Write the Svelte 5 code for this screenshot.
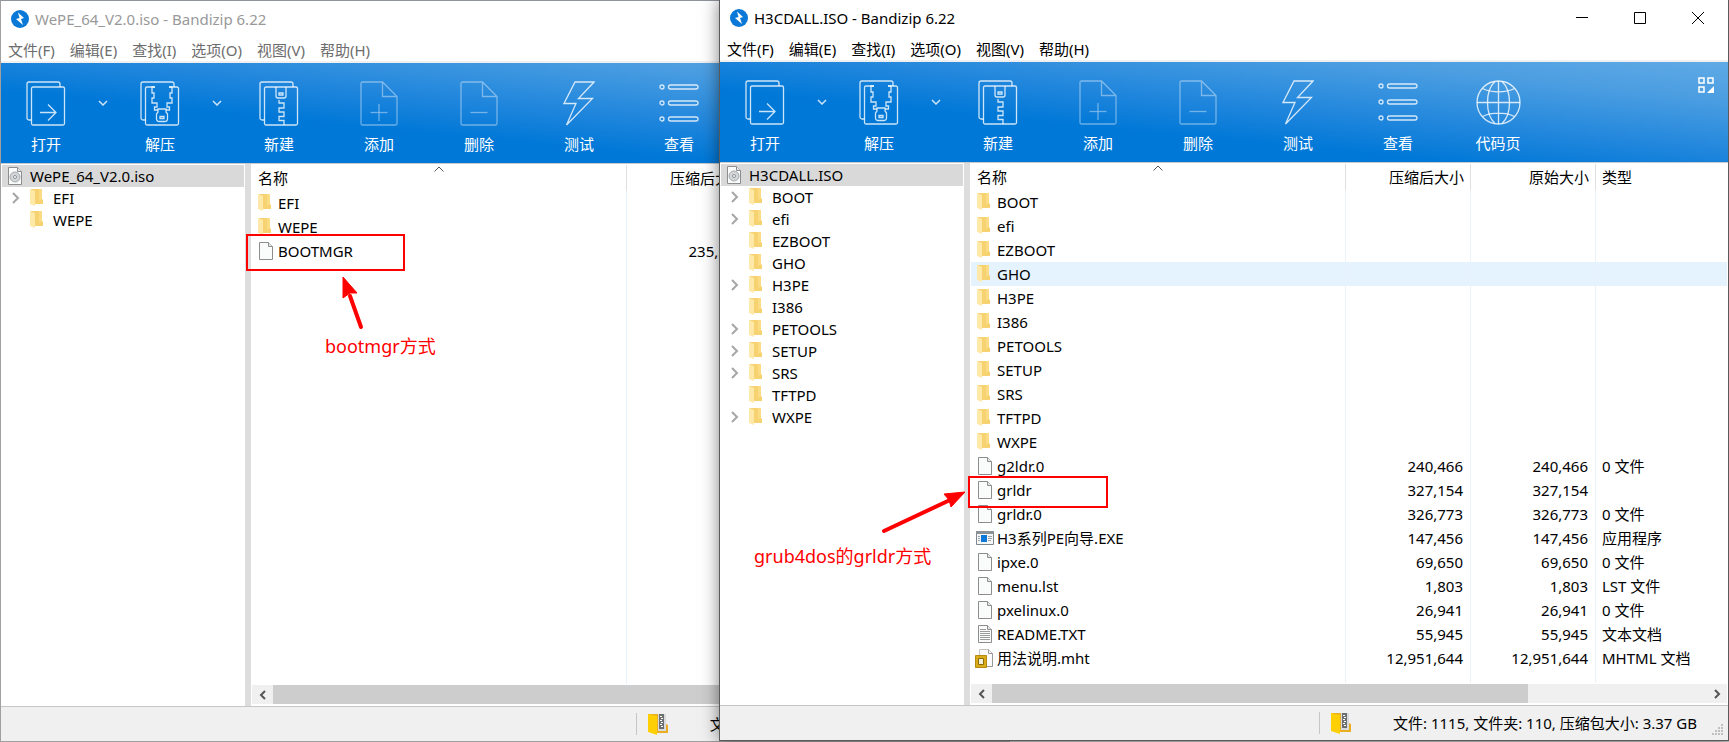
<script lang="ts">
	type Row = { name: string; icon: string; size?: string; type?: string; hover?: boolean };
	type TreeNode = { name: string; open?: boolean };
	type ArchiveWindow = {
		id: string;
		title: string;
		active: boolean;
		tree: TreeNode[];
		rows: Row[];
		status: string;
	};

	const menus = ['文件(F)', '编辑(E)', '查找(I)', '选项(O)', '视图(V)', '帮助(H)'];

	const tools = [
		{ icon: 'open', label: '打开', menu: true },
		{ icon: 'extract', label: '解压', menu: true },
		{ icon: 'new', label: '新建' },
		{ icon: 'add', label: '添加', disabled: true },
		{ icon: 'delete', label: '删除', disabled: true },
		{ icon: 'test', label: '测试' },
		{ icon: 'view', label: '查看' },
		{ icon: 'codepage', label: '代码页' },
	];

	const windows: ArchiveWindow[] = [
		{
			id: 'back',
			title: 'WePE_64_V2.0.iso',
			active: false,
			tree: [{ name: 'EFI', open: true }, { name: 'WEPE' }],
			rows: [
				{ name: 'EFI', icon: 'folder' },
				{ name: 'WEPE', icon: 'folder' },
				{ name: 'BOOTMGR', icon: 'file', size: '235,520' },
			],
			status: '文件: 16, 文件夹: 4, 压缩包大小: 158 MB',
		},
		{
			id: 'front',
			title: 'H3CDALL.ISO',
			active: true,
			tree: [
				{ name: 'BOOT', open: true },
				{ name: 'efi', open: true },
				{ name: 'EZBOOT' },
				{ name: 'GHO' },
				{ name: 'H3PE', open: true },
				{ name: 'I386' },
				{ name: 'PETOOLS', open: true },
				{ name: 'SETUP', open: true },
				{ name: 'SRS', open: true },
				{ name: 'TFTPD' },
				{ name: 'WXPE', open: true },
			],
			rows: [
				{ name: 'BOOT', icon: 'folder' },
				{ name: 'efi', icon: 'folder' },
				{ name: 'EZBOOT', icon: 'folder' },
				{ name: 'GHO', icon: 'folder', hover: true },
				{ name: 'H3PE', icon: 'folder' },
				{ name: 'I386', icon: 'folder' },
				{ name: 'PETOOLS', icon: 'folder' },
				{ name: 'SETUP', icon: 'folder' },
				{ name: 'SRS', icon: 'folder' },
				{ name: 'TFTPD', icon: 'folder' },
				{ name: 'WXPE', icon: 'folder' },
				{ name: 'g2ldr.0', icon: 'file', size: '240,466', type: '0 文件' },
				{ name: 'grldr', icon: 'file', size: '327,154' },
				{ name: 'grldr.0', icon: 'file', size: '326,773', type: '0 文件' },
				{ name: 'H3系列PE向导.EXE', icon: 'exe', size: '147,456', type: '应用程序' },
				{ name: 'ipxe.0', icon: 'file', size: '69,650', type: '0 文件' },
				{ name: 'menu.lst', icon: 'file', size: '1,803', type: 'LST 文件' },
				{ name: 'pxelinux.0', icon: 'file', size: '26,941', type: '0 文件' },
				{ name: 'README.TXT', icon: 'text', size: '55,945', type: '文本文档' },
				{ name: '用法说明.mht', icon: 'mht', size: '12,951,644', type: 'MHTML 文档' },
			],
			status: '文件: 1115, 文件夹: 110, 压缩包大小: 3.37 GB',
		},
	];
</script>

{#snippet toolIcon(name: string)}
	{#if name === 'open'}
		<svg width="40" height="45" viewBox="0 0 40 45">
			<path d="M5.5 39H3a2 2 0 0 1-2-2V3a2 2 0 0 1 2-2h29a2 2 0 0 1 2 2v3" />
			<rect x="5.5" y="6" width="33" height="38" rx="1.5" />
			<path d="M14 31.500h16M22 23.500l8 8-8 8" />
		</svg>
	{:else if name === 'extract'}
		<svg width="40" height="45" viewBox="0 0 40 45">
			<path d="M5.500 39H3a2 2 0 0 1-2-2V3a2 2 0 0 1 2-2h29a2 2 0 0 1 2 2v3" />
			<path d="M15 6H7a1.500 1.500 0 0 0-1.500 1.500v35A1.500 1.500 0 0 0 7 44h30a1.500 1.500 0 0 0 1.500-1.500v-35A1.500 1.500 0 0 0 37 6h-8" />
			<path d="M15 6h-3v6h2v5h-2v5h5v4h-2.500v3H18M29 6h3v6h-2v5h2v5h-5v4h2.500v3H26" />
			<path d="M18 28h8v3l1.500 2v5a2.500 2.500 0 0 1-2.500 2.500h-6a2.500 2.500 0 0 1-2.500-2.500v-5l1.500-2z" />
			<path d="M20 35.500h4v2h-4z" />
		</svg>
	{:else if name === 'new'}
		<svg width="40" height="45" viewBox="0 0 40 45">
			<path d="M5.500 39H3a2 2 0 0 1-2-2V3a2 2 0 0 1 2-2h29a2 2 0 0 1 2 2v3" />
			<rect x="5.500" y="6" width="33" height="38" rx="1.500" />
			<path d="M17 6v9a2 2 0 0 0 2 2h6a2 2 0 0 0 2-2V6M20 12h4v2h-4z" />
			<path d="M20 19v3h5v5h-5v4h5v4.500h-5v4h5V44" />
		</svg>
	{:else if name === 'add' || name === 'delete'}
		<svg width="38" height="45" viewBox="0 0 38 45">
			<path d="M2.500 1h20L37 15.500v27A1.500 1.500 0 0 1 35.500 44h-33A1.500 1.500 0 0 1 1 42.500v-40A1.500 1.500 0 0 1 2.500 1zM22.500 1v14.500H37" />
			<path d="M10.500 31.500h17" />
			{#if name === 'add'}<path d="M19 23v17" />{/if}
		</svg>
	{:else if name === 'test'}
		<svg width="32" height="45" viewBox="0 0 32 45">
			<path d="M12 1h19L15.500 17.500h14L3.500 44 13 22.500H1z" />
		</svg>
	{:else if name === 'view'}
		<svg width="40" height="45" viewBox="0 0 40 45">
			{#each [6, 22, 38] as y}
				<circle cx="3" cy={y} r="2" />
				<rect x="9.500" y={y - 2} width="29.500" height="4" rx="2" />
			{/each}
		</svg>
	{:else}
		<svg width="45" height="45" viewBox="0 0 45 45">
			<circle cx="22.500" cy="22.500" r="21.500" />
			<path d="M22.500 1v43M1 22.500h43M6.500 8.500c9 4.500 23 4.500 32 0M6.500 36.500c9-4.500 23-4.500 32 0" />
			<path d="M19 1.500c-10 9-10 33 0 42M26 1.500c10 9 10 33 0 42" />
		</svg>
	{/if}
{/snippet}

{#snippet fileIcon(name: string)}
	<svg class="file-icon" width="20" height="20" viewBox="0 0 20 20">
		{#if name === 'folder'}
			<path d="M4 1h11v10l1 1v4H4z" fill="#f6d270" />
			<path d="M3 1l5 2v15l-5-2z" fill="#ffe9a8" />
			<path d="M12 1h3v10l-3 2z" fill="#fbdc85" />
		{:else if name === 'exe'}
			<path d="M2.500 3.500h17v13h-17z" fill="#f4f6f7" stroke="#7e868c" />
			<path d="M2 3h18v3H2z" fill="#8a9298" />
			<path d="M7 7h6v7H7z" fill="#0a78d6" />
			<path d="M4 8.500h2M4 10.500h2M4 12.500h2M14 8.500h4M14 10.500h4M14 12.500h3" stroke="#9aa2a8" />
		{:else if name === 'mht'}
			<path d="M5.500 1.500h9l4 4v13h-13z" fill="#fbfbfb" stroke="#c4c4c4" />
			<path d="M14.500 1.500v4h4v13h-6" fill="none" stroke="#999" />
			<path d="M1.500 7.500h11v12h-11z" fill="#d9ab1a" stroke="#b48a10" />
			<path d="M4.500 10.500h5v6h-5z" fill="#f3edda" stroke="#8b6d08" />
		{:else}
			<path d="M4.500 1.500h9l4 4v13h-13z" fill="#fafbfb" stroke="#8d8d8d" />
			<path d="M13.500 1.500v4h4" fill="#e8e8e8" stroke="#8d8d8d" />
			{#if name === 'text'}
				<path d="M6 5.500h6M6 7.500h10M6 9.500h10M6 11.500h10M6 13.500h10M6 15.500h10" stroke="#9a9a9a" />
			{:else if name === 'disc'}
				<circle cx="11" cy="11" r="5" fill="#d3d6d8" stroke="#a7abad" />
				<circle cx="11" cy="11" r="1.500" fill="#fff" stroke="#8d9193" />
			{/if}
		{/if}
	</svg>
{/snippet}

<main class="desktop">
	{#each windows as win}
		<section class="window {win.id}" class:inactive={!win.active}>
			<header class="titlebar">
				<svg class="logo" width="18" height="18" viewBox="0 0 18 18">
					<circle cx="9" cy="9" r="9" fill="#0a78d6" />
					<path d="M7 2.500l6 5.500-3 1 2 6-7-6 3.500-1z" fill="#fff" />
				</svg>
				<h1>{win.title} - Bandizip 6.22</h1>
				<div class="controls">
					<button aria-label="最小化"><svg width="12" height="12"><path d="M0 5.500h12" /></svg></button>
					<button aria-label="最大化"><svg width="12" height="12"><path d="M.5.5h11v11H.5z" /></svg></button>
					<button aria-label="关闭"><svg width="12" height="12"><path d="M0 0l12 12M12 0L0 12" /></svg></button>
				</div>
			</header>

			<nav class="menubar">
				{#each menus as menu}
					<button>{menu}</button>
				{/each}
			</nav>

			<div class="toolbar">
				{#each tools as tool}
					<button class="tool" class:narrow={tool.menu} class:dim={tool.disabled}>
						{@render toolIcon(tool.icon)}
						<span>{tool.label}</span>
					</button>
					{#if tool.menu}
						<button class="drop" aria-label="{tool.label}菜单">
							<svg width="10" height="6" viewBox="0 0 10 6"><path d="M1 1l4 4 4-4" /></svg>
						</button>
					{/if}
				{/each}
				<button class="layout" aria-label="工具栏布局">
					<svg width="16" height="16" viewBox="0 0 16 16">
						<path d="M1 1h5v5H1zM10 1h5v5h-5zM1 10h5v5H1z" fill="none" stroke="#fff" stroke-width="1.500" />
						<path d="M16 9v7H9z" fill="#fff" />
					</svg>
				</button>
			</div>

			<div class="panes">
				<ul class="tree">
					<li>
						<button class="node root">
							{@render fileIcon('disc')}
							{win.title}
						</button>
					</li>
					{#each win.tree as node}
						<li>
							<button class="node">
								<span class="expander">
									{#if node.open}
										<svg width="8" height="12" viewBox="0 0 8 12"><path d="M1 1l5 5-5 5" /></svg>
									{/if}
								</span>
								{@render fileIcon('folder')}
								{node.name}
							</button>
						</li>
					{/each}
				</ul>

				<div class="list">
					<div class="scroller">
						<table>
							<colgroup>
								<col class="col-name" />
								<col class="col-size" />
								<col class="col-size" />
								<col />
							</colgroup>
							<thead>
								<tr>
									<th>
										名称
										<svg class="sort" width="10" height="6" viewBox="0 0 10 6"><path d="M.5 5.500l4.500-4.500 4.500 4.500" /></svg>
									</th>
									<th class="num">压缩后大小</th>
									<th class="num">原始大小</th>
									<th>类型</th>
								</tr>
							</thead>
							<tbody>
								{#each win.rows as row}
									<tr class:hover={row.hover}>
										<td><div class="name">{@render fileIcon(row.icon)}{row.name}</div></td>
										<td class="num">{row.size ?? ''}</td>
										<td class="num">{row.size ?? ''}</td>
										<td>{row.type ?? ''}</td>
									</tr>
								{/each}
								<tr class="filler"><td></td><td></td><td></td><td></td></tr>
							</tbody>
						</table>
					</div>
					<div class="scrollbar">
						<button aria-label="向左滚动"><svg width="8" height="10" viewBox="0 0 8 10"><path d="M6 1L2 5l4 4" /></svg></button>
						<div class="track"><div class="thumb"></div></div>
						<button aria-label="向右滚动"><svg width="8" height="10" viewBox="0 0 8 10"><path d="M2 1l4 4-4 4" /></svg></button>
					</div>
				</div>
			</div>

			<footer class="statusbar">
				<div class="summary">
					<svg width="22" height="22" viewBox="0 0 22 22">
						<path d="M1 1h18v10l2 1v8H5z" fill="#e9ae22" />
						<path d="M11 1h8v17h-8z" fill="#d8dadb" />
						<path d="M12 1h5v15h-5z" fill="#6c6f70" />
						<path d="M13 3.500h2M14 5.500h2M13 7.500h2M14 9.500h2M13 11.500h2M14 13.500h2" stroke="#fff" />
						<path d="M1 1l9 2v19l-9-3z" fill="#ffcf05" />
					</svg>
					<span>{win.status}</span>
				</div>
				<svg class="grip" width="12" height="12" viewBox="0 0 12 12">
					<path d="M9 0h2v2H9zM6 3h2v2H6zM9 3h2v2H9zM3 6h2v2H3zM6 6h2v2H6zM9 6h2v2H9zM0 9h2v2H0zM3 9h2v2H3zM6 9h2v2H6zM9 9h2v2H9z" />
				</svg>
			</footer>
		</section>
	{/each}

	<!-- red marks drawn over both windows -->
	<svg class="marks">
		<rect x="247" y="235" width="157" height="35" />
		<path d="M361 327L350 296" class="shaft" />
		<path d="M343 277l14 16-7 0-7 5z" class="head" />
		<text x="325" y="353">bootmgr方式</text>

		<rect x="969" y="477" width="138" height="30" />
		<path d="M884 531L950 500" class="shaft" />
		<path d="M965 492l-14 15-2-7-5-6z" class="head" />
		<text x="754" y="563">grub4dos的grldr方式</text>
	</svg>
</main>

<style>
	:global(body) {
		margin: 0;
		overflow: hidden;
		background: #c9c9c9;
	}

	.desktop {
		position: relative;
		height: 100vh;
		overflow: hidden;
		font-family: 'Noto Sans', 'Noto Sans CJK SC', sans-serif;
		font-size: 15px;
		line-height: 22px;
		color: #000;
	}

	button {
		margin: 0;
		padding: 0;
		border: none;
		background: none;
		font: inherit;
		color: inherit;
	}

	svg {
		display: block;
		flex-shrink: 0;
	}

	/* windows */
	.window {
		position: absolute;
		display: flex;
		flex-direction: column;
		box-sizing: border-box;
		background: #fff;
		border: 1px solid #5a5a5a;
	}
	.back {
		top: 0;
		bottom: 0;
		left: 0;
		right: 719px;
		border-color: #8f949c #a0a0a0 #a0a0a0;
	}
	.front {
		top: -1px;
		bottom: 1px;
		left: 719px;
		right: 0;
		box-shadow: 0 0 16px rgba(0, 0, 0, 0.5);
	}

	.titlebar {
		display: flex;
		align-items: center;
		height: 35px;
		padding: 0 1px 2px 10px;
	}
	.titlebar h1 {
		flex: 1;
		margin: 0 0 0 6px;
		font-size: 15px;
		font-weight: 400;
	}
	.controls {
		display: flex;
		align-self: stretch;
	}
	.controls button {
		display: flex;
		align-items: center;
		justify-content: center;
		width: 58px;
	}
	.controls path {
		fill: none;
		stroke: #000;
	}
	.inactive .titlebar {
		color: #999;
	}

	.menubar {
		display: flex;
		gap: 15px;
		padding: 1px 7px 0;
		border-bottom: 2px solid #f0f0f0;
	}
	.inactive .menubar {
		color: #6d6d6d;
	}

	/* toolbar */
	.toolbar {
		display: flex;
		height: 100px;
		flex-shrink: 0;
		color: #fff;
		background: linear-gradient(to top right, #0078d7 0%, #0078d7 36%, #1c84dc 52%, #4a9de1 80%, #60aae6 100%);
		border-bottom: 1px solid #c6cbd0;
	}
	.tool {
		display: flex;
		flex-direction: column;
		align-items: center;
		gap: 7px;
		width: 100px;
		padding-top: 18px;
	}
	.tool.narrow {
		width: 90px;
	}
	.tool svg {
		fill: none;
		stroke: rgba(255, 255, 255, 0.8);
		stroke-width: 1.3;
	}
	.tool.dim svg {
		opacity: 0.5;
	}
	.drop {
		display: flex;
		justify-content: center;
		width: 24px;
		padding-top: 37px;
	}
	.drop path {
		fill: none;
		stroke: rgba(255, 255, 255, 0.8);
		stroke-width: 1.5;
	}
	.layout {
		align-self: flex-start;
		margin: 15px 14px 0 auto;
	}

	/* panes */
	.panes {
		display: flex;
		flex: 1;
		min-height: 0;
	}
	.tree {
		width: 243px;
		margin: 0;
		padding: 1px 0 0 1px;
		border-right: 6px solid #ddd;
		list-style: none;
		flex-shrink: 0;
	}
	.node {
		display: flex;
		align-items: center;
		width: 242px;
		height: 22px;
	}
	.node .file-icon {
		margin-right: 6px;
	}
	.root {
		padding-left: 2px;
		background: #d9d9d9;
	}
	.expander {
		display: flex;
		justify-content: flex-end;
		width: 18px;
		margin-right: 7px;
	}
	.expander path {
		fill: none;
		stroke: #a6a6a6;
		stroke-width: 2;
	}

	.list {
		display: flex;
		flex-direction: column;
		flex: 1;
		min-width: 0;
		padding: 1px;
	}
	.scroller {
		flex: 1;
		min-height: 0;
	}
	table {
		width: 100%;
		height: 100%;
		table-layout: fixed;
		border-collapse: separate;
		border-spacing: 0;
	}
	.col-name {
		width: 375px;
	}
	.col-size {
		width: 125px;
	}
	th,
	td {
		box-sizing: border-box;
		height: 24px;
		padding: 0 6px;
		border-right: 1px solid #e8f2fb;
		text-align: left;
		white-space: nowrap;
	}
	th {
		position: relative;
		height: 26px;
		font-weight: 400;
		border-right-color: #e0e0e0;
	}
	th:last-child,
	td:last-child {
		border-right: none;
	}
	td:first-child {
		padding: 0 3px;
	}
	td.num {
		padding-right: 7px;
	}
	.num {
		text-align: right;
	}
	.sort {
		position: absolute;
		top: 1px;
		left: 50%;
		margin-left: -5px;
	}
	.sort path {
		fill: none;
		stroke: #555;
	}
	.name {
		display: flex;
		align-items: center;
		gap: 3px;
	}
	.hover td {
		background: #e5f3ff;
	}
	.filler td {
		height: auto;
	}

	.scrollbar {
		display: flex;
		height: 19px;
		margin: 1px 0;
		background: #f0f0f0;
	}
	.scrollbar button {
		display: flex;
		align-items: center;
		justify-content: center;
		width: 21px;
	}
	.scrollbar path {
		fill: none;
		stroke: #555;
		stroke-width: 2;
	}
	.track {
		flex: 1;
	}
	.thumb {
		width: 75%;
		height: 100%;
		background: #cdcdcd;
	}

	.statusbar {
		display: flex;
		align-items: center;
		justify-content: flex-end;
		height: 34px;
		background: #f0f0f0;
		border-top: 1px solid #c6c6c6;
	}
	.summary {
		display: flex;
		align-items: center;
		gap: 41px;
		padding-left: 10px;
		border-left: 1px solid #c6c6c6;
	}
	.grip {
		align-self: flex-end;
		margin: 0 4px 4px 15px;
		fill: #bfbfbf;
	}

	/* annotations */
	.marks {
		position: absolute;
		top: 0;
		left: 0;
		width: 100%;
		height: 100%;
		pointer-events: none;
	}
	.marks rect {
		fill: none;
		stroke: #f00;
		stroke-width: 2;
	}
	.marks .shaft {
		stroke: #f00;
		stroke-width: 4;
		stroke-linecap: round;
	}
	.marks .head,
	.marks text {
		fill: #f00;
	}
	.marks .head {
		stroke: #f00;
		stroke-width: 1;
	}
	.marks text {
		font-size: 18px;
	}
</style>
